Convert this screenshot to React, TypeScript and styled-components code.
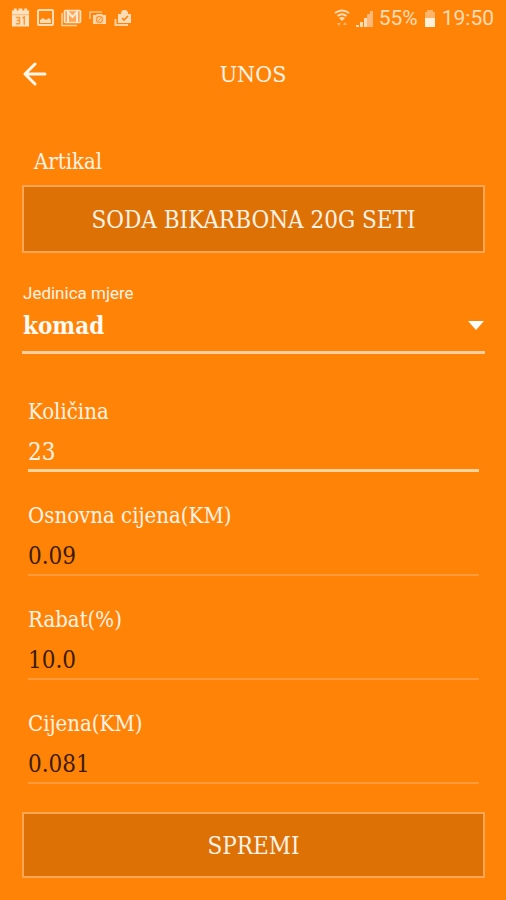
import React from "react";
import styled, { createGlobalStyle } from "styled-components";

const serif = `"DejaVu Serif Condensed", "DejaVu Serif", serif`;

const GlobalStyle = createGlobalStyle`
  *, *::before, *::after { box-sizing: border-box; }
  body { margin: 0; background: #ff8307; }
  button, input, select { margin: 0; font: inherit; color: inherit; }
`;

const Screen = styled.div`
  min-height: 100vh;
  display: flex;
  flex-direction: column;
  background: #ff8307;
  color: #fff3e6;
  font-family: ${serif};
`;

const StatusBar = styled.div`
  height: 36px;
  padding: 0 12px 0 11px;
  display: flex;
  align-items: center;
  justify-content: space-between;
  color: #ffdcb5;
  font: 21px/36px Roboto, sans-serif;
`;

const IconGroup = styled.div<{ $gap: number }>`
  display: flex;
  align-items: center;
  gap: ${(p) => p.$gap}px;
  svg { display: block; }
`;

const Header = styled.header`
  height: 76px;
  padding: 0 17px;
  display: grid;
  grid-template-columns: 36px 1fr 36px;
  align-items: center;
`;

const BackButton = styled.button`
  width: 36px;
  height: 36px;
  padding: 0;
  display: grid;
  place-items: center;
  border: 0;
  background: none;
`;

const Title = styled.h1`
  margin: 0;
  text-align: center;
  font-size: 23px;
  line-height: 32px;
  font-weight: 400;
`;

const Form = styled.form`
  padding: 34px 21px 21px 22px;
  display: flex;
  flex-direction: column;
`;

const ArticleLabel = styled.label`
  padding: 0 12px;
  font-size: 22px;
  line-height: 32px;
  margin-bottom: 7px;
`;

const BoxButton = styled.button<{ $height: number }>`
  width: 100%;
  height: ${(p) => p.$height}px;
  padding: 2px 12px 0;
  border: 2px solid #ffa553;
  background: #dd7106;
  font-size: 24px;
  line-height: 32px;
  text-align: center;
`;

const SelectField = styled.div`
  margin-top: 28px;
  display: flex;
  flex-direction: column;
  border-bottom: 3px solid #ffcf9f;
`;

const SelectLabel = styled.label`
  padding-left: 1px;
  font: 17px/24px Roboto, sans-serif;
`;

const SelectWrap = styled.div`
  display: grid;
  align-items: center;
  > * { grid-area: 1 / 1; }
  svg { justify-self: end; pointer-events: none; margin-bottom: 6px; }
`;

const Select = styled.select`
  width: 100%;
  height: 46px;
  padding: 0 24px 6px 1px;
  border: 0;
  border-radius: 0;
  outline: 0;
  appearance: none;
  background: transparent;
  color: #fffaf3;
  font-size: 24px;
  font-weight: 700;
`;

const Fields = styled.div`
  padding: 44px 6px 28px;
  display: flex;
  flex-direction: column;
  gap: 30px;
`;

const Field = styled.div`
  display: flex;
  flex-direction: column;
`;

const FieldLabel = styled.label`
  font-size: 22px;
  line-height: 28px;
`;

const Input = styled.input<{ $active?: boolean }>`
  width: 100%;
  height: 46px;
  padding: 8px 0 0;
  border: 0;
  border-bottom: ${(p) => (p.$active ? "3px solid #ffd39b" : "2px solid #ff9b3c")};
  border-radius: 0;
  outline: 0;
  background: transparent;
  color: ${(p) => (p.$active ? "#fff3e6" : "#3a1c00")};
  font-size: 24px;
`;

const CalendarIcon = () => (
  <svg width="19" height="20" viewBox="0 0 20 20" aria-hidden="true">
    <path fill="#ffe2c2" d="M1 2h2V0h3v2h2V0h4v2h2V0h3v2h2v5H1zM1 7h18v12H1z" />
    <path fill="none" stroke="#ff9a38" strokeWidth="1.6" d="M5 9.500h4v6.500H5M6 12.500h3M12 10l2-1v8" />
    <path stroke="#ffb46a" d="M1 6.500h18" />
  </svg>
);

const PictureIcon = () => (
  <svg width="17" height="18" viewBox="0 0 17 18" aria-hidden="true">
    <rect x="1" y="1" width="15" height="15" rx="1" fill="none" stroke="#ffdcb5" strokeWidth="2" />
    <path fill="#ffdcb5" d="M3 14v-3l3-2 3 2 3-2 2 2v3z" />
  </svg>
);

const MailIcon = () => (
  <svg width="21" height="18" viewBox="0 0 21 18" aria-hidden="true">
    <path fill="none" stroke="#ffd0a0" strokeWidth="1.6" d="M1 4v12.500h15" />
    <rect x="3.500" y="1.500" width="16" height="12" rx="1" fill="#ffa654" stroke="#ffe2c2" strokeWidth="1.6" />
    <path fill="none" stroke="#ffe9d2" strokeWidth="2" d="M7 13V3l4.500 5L16 3v10" />
  </svg>
);

const CashIcon = () => (
  <svg width="18" height="16" viewBox="0 0 18 16" aria-hidden="true">
    <path fill="none" stroke="#ffc287" strokeWidth="1.6" d="M1 9V2h12" />
    <path fill="#ffd6ab" d="M4 5h3l1-1h5l1 1h3v9H4z" />
    <circle cx="10.500" cy="9.500" r="3" fill="none" stroke="#ff9a38" strokeWidth="1.4" />
    <path stroke="#ff9a38" d="M9 11l3-3" />
  </svg>
);

const BagCheckIcon = () => (
  <svg width="18" height="18" viewBox="0 0 18 18" aria-hidden="true">
    <path fill="none" stroke="#ffd0a0" strokeWidth="2" d="M1.500 10v6H14" />
    <path fill="#ffdcb5" d="M4 5h3V3l2-2h3l2 2v2h3v9H4z" />
    <path fill="none" stroke="#ff8307" strokeWidth="1.6" d="M8 9l2 2 4-4" />
  </svg>
);

const WifiIcon = () => (
  <svg width="16" height="18" viewBox="0 0 16 18" aria-hidden="true">
    <path fill="none" stroke="#ffdcb5" strokeWidth="2" d="M1 4q7-5 14 0M3.500 7q4.500-3.500 9 0" />
    <path fill="#ffdcb5" d="M5 9q3-2 6 0l-3 3z" />
    <path fill="#ffb46a" d="M3 14h4l-2 3zM9 16h4l-2-3z" />
  </svg>
);

const SignalIcon = () => (
  <svg width="17" height="17" viewBox="0 0 17 17" aria-hidden="true">
    <path fill="#ffdcb5" d="M0 15h3v2H0zM4 12h3v5H4zM8 8h3v9H8z" />
    <path fill="#ffb877" d="M11 4h3v13h-3zM14 1h3v16h-3z" />
  </svg>
);

const BatteryIcon = () => (
  <svg width="12" height="17" viewBox="0 0 12 17" aria-hidden="true">
    <path fill="#ffb46a" d="M1 2h2V0h6v2h2v6H1z" />
    <path fill="#fff0db" d="M1 8h10v9H1z" />
  </svg>
);

const BackIcon = () => (
  <svg width="24" height="24" viewBox="0 0 24 24" aria-hidden="true">
    <path
      fill="none"
      stroke="#fff6ec"
      strokeWidth="3"
      strokeLinecap="round"
      strokeLinejoin="round"
      d="M22 12H2M12 2L2 12l10 10"
    />
  </svg>
);

const CaretIcon = () => (
  <svg width="17" height="9" viewBox="0 0 17 9" aria-hidden="true">
    <path fill="#fff" d="M0 0h16L8 9z" />
  </svg>
);

const fields = [
  { id: "kolicina", label: "Količina", value: "23", active: true },
  { id: "osnovna", label: "Osnovna cijena(KM)", value: "0.09" },
  { id: "rabat", label: "Rabat(%)", value: "10.0" },
  { id: "cijena", label: "Cijena(KM)", value: "0.081" },
];

export default function App() {
  return (
    <Screen>
      <GlobalStyle />
      <StatusBar>
        <IconGroup $gap={7}>
          <CalendarIcon />
          <PictureIcon />
          <MailIcon />
          <CashIcon />
          <BagCheckIcon />
        </IconGroup>
        <IconGroup $gap={6}>
          <WifiIcon />
          <SignalIcon />
          <span>55%</span>
          <BatteryIcon />
          <span>19:50</span>
        </IconGroup>
      </StatusBar>
      <Header>
        <BackButton type="button" aria-label="Natrag">
          <BackIcon />
        </BackButton>
        <Title>UNOS</Title>
      </Header>
      <Form onSubmit={(e) => e.preventDefault()}>
        <ArticleLabel htmlFor="artikal">Artikal</ArticleLabel>
        <BoxButton id="artikal" type="button" $height={68}>
          SODA BIKARBONA 20G SETI
        </BoxButton>
        <SelectField>
          <SelectLabel htmlFor="jedinica">Jedinica mjere</SelectLabel>
          <SelectWrap>
            <Select id="jedinica" defaultValue="komad">
              <option value="komad">komad</option>
            </Select>
            <CaretIcon />
          </SelectWrap>
        </SelectField>
        <Fields>
          {fields.map((f) => (
            <Field key={f.id}>
              <FieldLabel htmlFor={f.id}>{f.label}</FieldLabel>
              <Input id={f.id} type="text" inputMode="decimal" defaultValue={f.value} $active={f.active} />
            </Field>
          ))}
        </Fields>
        <BoxButton type="submit" $height={66}>
          SPREMI
        </BoxButton>
      </Form>
    </Screen>
  );
}
